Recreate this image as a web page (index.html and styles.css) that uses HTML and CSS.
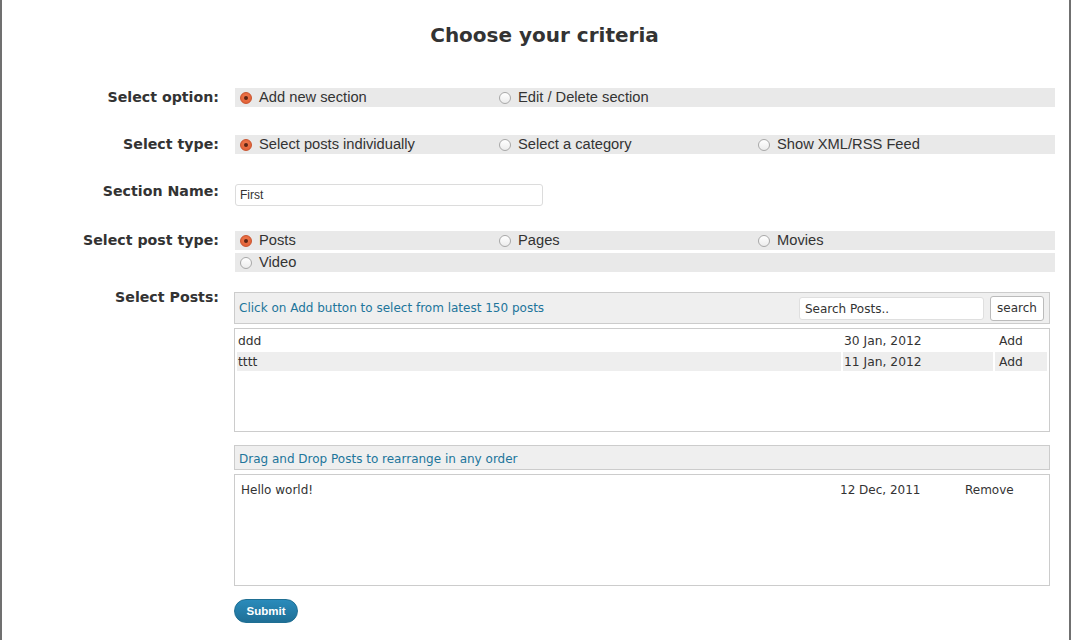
FILE: index.html
```html
<!DOCTYPE html>
<html>
<head>
<meta charset="utf-8">
<link rel="stylesheet" href="styles.css">
</head>
<body>
<div class="page">
  <h1 class="title">Choose your criteria</h1>
  <div class="form">
    <div class="row r1">
      <div class="label">Select option:</div>
      <div class="field">
        <div class="bar">
          <label class="opt"><span class="radio on"></span>Add new section</label>
          <label class="opt"><span class="radio"></span>Edit / Delete section</label>
        </div>
      </div>
    </div>
    <div class="row r2">
      <div class="label">Select type:</div>
      <div class="field">
        <div class="bar">
          <label class="opt"><span class="radio on"></span>Select posts individually</label>
          <label class="opt"><span class="radio"></span>Select a category</label>
          <label class="opt"><span class="radio"></span>Show XML/RSS Feed</label>
        </div>
      </div>
    </div>
    <div class="row r3">
      <div class="label lower">Section Name:</div>
      <div class="field pad3">
        <input class="name" type="text" value="First">
      </div>
    </div>
    <div class="row r4">
      <div class="label">Select post type:</div>
      <div class="field">
        <div class="bar">
          <label class="opt"><span class="radio on"></span>Posts</label>
          <label class="opt"><span class="radio"></span>Pages</label>
          <label class="opt"><span class="radio"></span>Movies</label>
        </div>
        <div class="bar second">
          <label class="opt"><span class="radio"></span>Video</label>
        </div>
      </div>
    </div>
    <div class="row r5">
      <div class="label">Select Posts:</div>
      <div class="field pad4 posts">
        <div class="head">
          <span class="hint">Click on Add button to select from latest 150 posts</span>
          <div class="search">
            <input class="sinput" type="text" value="Search Posts..">
            <button class="sbtn">search</button>
          </div>
        </div>
        <div class="list">
          <table class="ptable">
            <tr><td class="t">ddd</td><td class="d">30 Jan, 2012</td><td class="a">Add</td></tr>
            <tr class="alt"><td class="t">tttt</td><td class="d">11 Jan, 2012</td><td class="a">Add</td></tr>
          </table>
        </div>
        <div class="head2">Drag and Drop Posts to rearrange in any order</div>
        <div class="sortable">
          <div class="item"><span class="it">Hello world!</span><span class="idate">12 Dec, 2011</span><span class="irm">Remove</span></div>
        </div>
        <button class="submit">Submit</button>
      </div>
    </div>
  </div>
</div>
</body>
</html>
```
FILE: styles.css
```css
html, body {
  margin: 0;
  padding: 0;
  background: #fff;
}
.page {
  width: 1071px;
  height: 640px;
  box-sizing: border-box;
  border-left: 2px solid #707070;
  border-right: 2px solid #707070;
  font-family: "DejaVu Sans", sans-serif;
  color: #333;
  overflow: hidden;
}
.title {
  margin: 0;
  padding: 23px 0 0 18px;
  font: bold 20px/24px "DejaVu Sans", sans-serif;
  text-align: center;
  color: #333;
}
.form {
  margin-top: 41px;
}
.row {
  display: flex;
  align-items: flex-start;
}
.r2 { margin-top: 28px; }
.r3 { margin-top: 27px; }
.r4 { margin-top: 25px; }
.r5 { margin-top: 16px; }
.label {
  width: 217px;
  flex-shrink: 0;
  text-align: right;
  font: bold 14.2px/18px "DejaVu Sans", sans-serif;
  color: #333;
}
.label.lower { padding-top: 1px; }
.field {
  margin-left: 16px;
  width: 820px;
}
.pad3 { padding-top: 3px; }
.pad4 { padding-top: 4px; }
.bar {
  display: grid;
  grid-template-columns: 259px 259px 259px;
  height: 19px;
  background: #e9e9e9;
  padding-left: 5px;
}
.bar.second { margin-top: 3px; }
.opt {
  display: flex;
  align-items: center;
  font: 14.7px/19px "Liberation Sans", Arial, sans-serif;
  color: #333;
  white-space: nowrap;
}
.radio {
  width: 10px;
  height: 10px;
  border-radius: 50%;
  border: 1px solid #a8a8a8;
  background: linear-gradient(#fff, #ececec);
  margin-right: 7px;
  position: relative;
  flex-shrink: 0;
}
.radio.on {
  border-color: #c9532e;
  background: radial-gradient(circle at 50% 40%, #f07a4e, #de5a30);
}
.radio.on::after {
  content: "";
  position: absolute;
  left: 3px;
  top: 3px;
  width: 4px;
  height: 4px;
  border-radius: 50%;
  background: #5b2414;
}
.name {
  display: block;
  width: 308px;
  height: 22px;
  box-sizing: border-box;
  border: 1px solid #dcdcdc;
  border-radius: 3px;
  padding: 0 4px;
  font: 12px "Liberation Sans", Arial, sans-serif;
  color: #333;
  margin: 0;
}
.posts {
  width: 816px;
  margin-left: 15px;
}
.head {
  height: 32px;
  box-sizing: border-box;
  border: 1px solid #ccc;
  background: #efefef;
  display: flex;
  align-items: center;
  justify-content: space-between;
  padding: 0 5px 0 4px;
}
.hint, .head2 {
  font: 12px/16px "DejaVu Sans", sans-serif;
  color: #21759b;
}
.search {
  display: flex;
  align-items: center;
}
.sinput {
  width: 185px;
  height: 23px;
  box-sizing: border-box;
  border: 1px solid #dfdfdf;
  border-radius: 3px;
  background: #fff;
  padding: 0 5px;
  font: 12px "DejaVu Sans", sans-serif;
  color: #333;
  margin: 1px 0 0 0;
}
.sbtn {
  margin-left: 6px;
  width: 54px;
  height: 25px;
  box-sizing: border-box;
  border: 1px solid #bbb;
  border-radius: 3px;
  background: #fff;
  font: 12px "DejaVu Sans", sans-serif;
  color: #333;
  padding: 0;
}
.list {
  margin-top: 4px;
  height: 104px;
  box-sizing: border-box;
  border: 1px solid #ccc;
  background: #fff;
}
.ptable {
  width: 100%;
  border-spacing: 2px;
  font: 12.3px "DejaVu Sans", sans-serif;
  color: #333;
}
.ptable td {
  height: 19px;
  padding: 0 1px;
}
.ptable .d { width: 148px; }
.ptable .a { width: 47px; padding-left: 4px; }
.ptable tr.alt td { background: #eee; }
.head2 {
  margin-top: 13px;
  height: 25px;
  box-sizing: border-box;
  border: 1px solid #ccc;
  background: #efefef;
  padding: 0 4px;
  display: flex;
  align-items: center;
  padding-top: 2px;
}
.sortable {
  margin-top: 4px;
  height: 112px;
  box-sizing: border-box;
  border: 1px solid #ccc;
  background: #fff;
}
.item {
  display: flex;
  font: 12px/16px "DejaVu Sans", sans-serif;
  color: #333;
  padding: 7px 0 0 6px;
}
.it { width: 599px; }
.idate { width: 125px; }
.submit {
  margin-top: 13px;
  width: 64px;
  height: 24px;
  border: 1px solid #1f6f93;
  border-radius: 12px;
  background: linear-gradient(#2a8bbb, #1f6f96);
  color: #fff;
  font: bold 11.5px "Liberation Sans", Arial, sans-serif;
  padding: 0;
  display: block;
}
```
